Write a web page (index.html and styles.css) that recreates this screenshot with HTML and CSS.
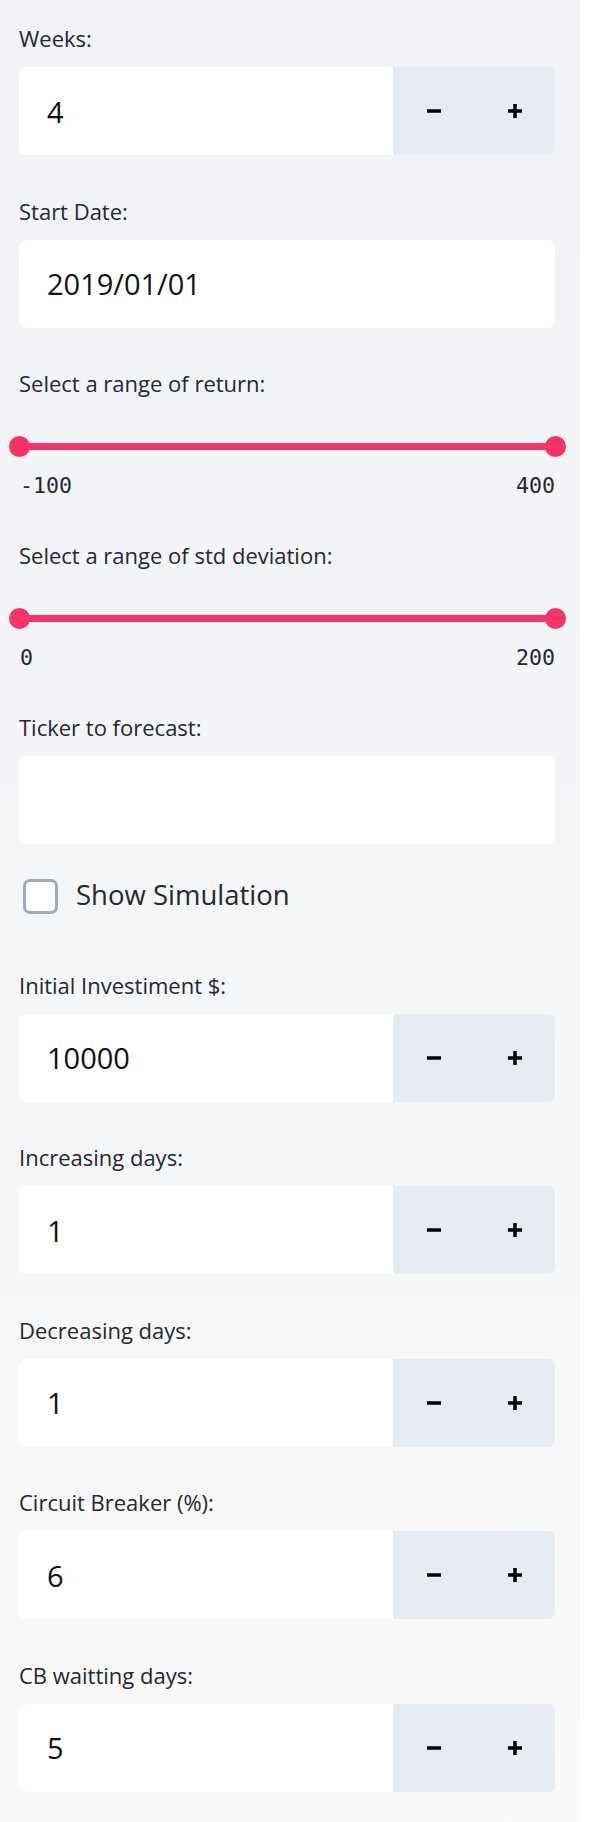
FILE: index.html
```html
<!DOCTYPE html>
<html>
<head>
<meta charset="utf-8">
<link rel="stylesheet" href="styles.css">
</head>
<body>
<aside class="sidebar">

  <div class="field">
    <div class="label">Weeks:</div>
    <div class="number">
      <div class="value">4</div>
      <div class="steppers">
        <button class="step"><svg viewBox="0 0 16 16" width="16" height="16"><path d="M1 8h14"/></svg></button>
        <button class="step"><svg viewBox="0 0 16 16" width="16" height="16"><path d="M1 8h14M8 1v14"/></svg></button>
      </div>
    </div>
  </div>

  <div class="field">
    <div class="label">Start Date:</div>
    <div class="textbox">2019/01/01</div>
  </div>

  <div class="field">
    <div class="label">Select a range of return:</div>
    <div class="slider">
      <span class="thumb"></span><span class="track"></span><span class="thumb"></span>
    </div>
    <div class="ticks"><span>-100</span><span>400</span></div>
  </div>

  <div class="field">
    <div class="label">Select a range of std deviation:</div>
    <div class="slider">
      <span class="thumb"></span><span class="track"></span><span class="thumb"></span>
    </div>
    <div class="ticks"><span>0</span><span>200</span></div>
  </div>

  <div class="field">
    <div class="label">Ticker to forecast:</div>
    <div class="textbox"></div>
  </div>

  <label class="check">
    <span class="box"></span>
    <span class="check-text">Show Simulation</span>
  </label>

  <div class="field">
    <div class="label">Initial Investiment $:</div>
    <div class="number">
      <div class="value">10000</div>
      <div class="steppers">
        <button class="step"><svg viewBox="0 0 16 16" width="16" height="16"><path d="M1 8h14"/></svg></button>
        <button class="step"><svg viewBox="0 0 16 16" width="16" height="16"><path d="M1 8h14M8 1v14"/></svg></button>
      </div>
    </div>
  </div>

  <div class="field">
    <div class="label">Increasing days:</div>
    <div class="number">
      <div class="value">1</div>
      <div class="steppers">
        <button class="step"><svg viewBox="0 0 16 16" width="16" height="16"><path d="M1 8h14"/></svg></button>
        <button class="step"><svg viewBox="0 0 16 16" width="16" height="16"><path d="M1 8h14M8 1v14"/></svg></button>
      </div>
    </div>
  </div>

  <div class="field">
    <div class="label">Decreasing days:</div>
    <div class="number">
      <div class="value">1</div>
      <div class="steppers">
        <button class="step"><svg viewBox="0 0 16 16" width="16" height="16"><path d="M1 8h14"/></svg></button>
        <button class="step"><svg viewBox="0 0 16 16" width="16" height="16"><path d="M1 8h14M8 1v14"/></svg></button>
      </div>
    </div>
  </div>

  <div class="field">
    <div class="label">Circuit Breaker (%):</div>
    <div class="number">
      <div class="value">6</div>
      <div class="steppers">
        <button class="step"><svg viewBox="0 0 16 16" width="16" height="16"><path d="M1 8h14"/></svg></button>
        <button class="step"><svg viewBox="0 0 16 16" width="16" height="16"><path d="M1 8h14M8 1v14"/></svg></button>
      </div>
    </div>
  </div>

  <div class="field">
    <div class="label">CB waitting days:</div>
    <div class="number">
      <div class="value">5</div>
      <div class="steppers">
        <button class="step"><svg viewBox="0 0 16 16" width="16" height="16"><path d="M1 8h14"/></svg></button>
        <button class="step"><svg viewBox="0 0 16 16" width="16" height="16"><path d="M1 8h14M8 1v14"/></svg></button>
      </div>
    </div>
  </div>

</aside>
</body>
</html>
```

FILE: styles.css
```css
html, body {
  margin: 0;
  padding: 0;
  background: #ffffff;
}

body {
  font-family: "Open Sans", "Noto Sans", sans-serif;
  color: #262730;
}

.sidebar {
  width: 580px;
  min-height: 1822px;
  box-sizing: border-box;
  padding: 23px 25px 0 19px;
  background: linear-gradient(180deg, #f0f2f6 0%, #f9f9f9 100%);
}

.field {
  margin-bottom: 40.5px;
}

.label {
  font-size: 22px;
  line-height: 30px;
  height: 30px;
  padding-bottom: 14px;
  color: #262730;
  white-space: nowrap;
}

.number {
  display: flex;
  height: 88px;
}

.value,
.textbox {
  background: #ffffff;
  font-size: 29px;
  color: #111111;
  padding-left: 28px;
  display: flex;
  align-items: center;
  box-sizing: border-box;
  height: 88px;
}

.value {
  flex: 1;
  border-radius: 7px 0 0 7px;
}

.textbox {
  border-radius: 7px;
}

.steppers {
  display: flex;
  width: 162px;
  background: #e6eaf1;
  border-radius: 0 7px 7px 0;
}

.step {
  flex: 1;
  border: 0;
  background: transparent;
  padding: 0;
  margin: 0;
  display: flex;
  align-items: center;
  justify-content: center;
}

.step svg {
  display: block;
}

.step path {
  stroke: #000000;
  stroke-width: 3.5;
  fill: none;
}

.slider {
  display: flex;
  align-items: center;
  margin: 24px -10.5px 0;
  height: 21px;
}

.thumb {
  width: 21px;
  height: 21px;
  border-radius: 50%;
  background: #f63366;
  flex: none;
}

.track {
  flex: 1;
  height: 7px;
  background: #f63366;
  margin: 0 -2px;
}

.ticks {
  display: flex;
  justify-content: space-between;
  margin-top: 15.5px;
  height: 27px;
  line-height: 26px;
  font-family: "DejaVu Sans Mono", "Liberation Mono", monospace;
  font-size: 21.6px;
  color: #262730;
  padding-left: 1px;
}

.check {
  display: flex;
  align-items: center;
  height: 35px;
  margin-top: -6px;
  margin-bottom: 56px;
  padding-left: 3.5px;
}

.box {
  width: 35px;
  height: 35px;
  box-sizing: border-box;
  border: 3px solid #a3a8b8;
  border-radius: 7px;
  background: #ffffff;
  flex: none;
}

.check-text {
  margin-left: 18.5px;
  margin-bottom: 4px;
  font-size: 27.5px;
  color: #262730;
  white-space: nowrap;
}
```
